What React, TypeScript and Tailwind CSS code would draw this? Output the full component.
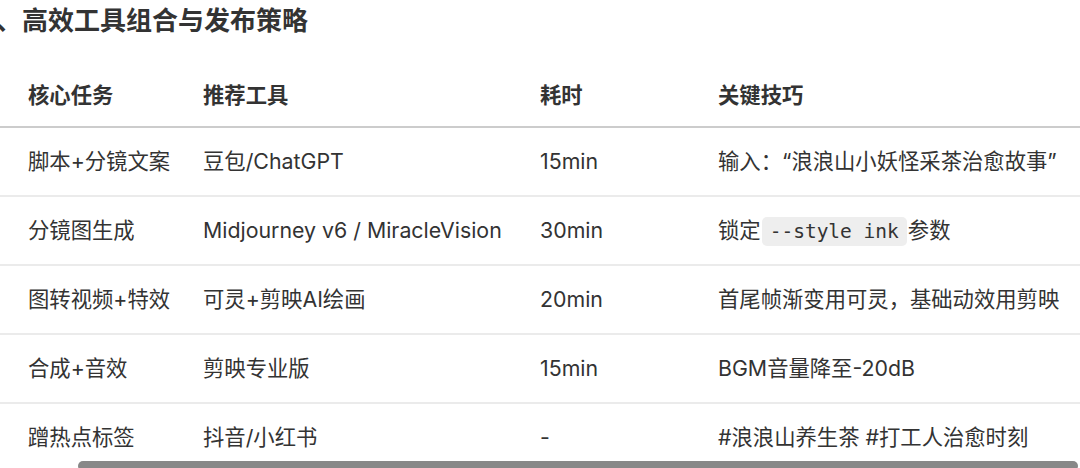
import React from 'react';

const rows = [
    { task: '脚本+分镜文案', tool: '豆包/ChatGPT', time: '15min', tip: <>输入：“浪浪山小妖怪采茶治愈故事”</> },
    {
        task: '分镜图生成',
        tool: 'Midjourney v6 / MiracleVision',
        time: '30min',
        tip: (
            <>
                锁定
                <code className="mx-[1px] rounded-[5px] bg-[#eeeeee] px-[8px] py-[3px] font-['DejaVu_Sans_Mono',monospace] text-[19.5px]">
                    --style ink
                </code>
                参数
            </>
        ),
    },
    { task: '图转视频+特效', tool: '可灵+剪映AI绘画', time: '20min', tip: <>首尾帧渐变用可灵，基础动效用剪映</> },
    { task: '合成+音效', tool: '剪映专业版', time: '15min', tip: <>BGM音量降至-20dB</> },
    { task: '蹭热点标签', tool: '抖音/小红书', time: '-', tip: <>#浪浪山养生茶 #打工人治愈时刻</> },
];

export default function App() {
    return (
        <div className="relative h-[468px] w-[1080px] overflow-hidden bg-white font-['Inter','Noto_Sans_CJK_SC',sans-serif] text-[#333333]">
            <h2 className="-ml-[4px] h-[42px] text-[26px] font-bold leading-[42px] text-[#333333]">
                、高效工具组合与发布策略
            </h2>

            <div className="mt-[24px] text-[21.33px]">
                <div className="grid h-[62px] grid-cols-[175px_337px_178px_1fr] items-center border-b-2 border-[#cccccc] font-bold">
                    <div className="pl-[28px]">核心任务</div>
                    <div className="pl-[28px]">推荐工具</div>
                    <div className="pl-[28px]">耗时</div>
                    <div className="pl-[28px]">关键技巧</div>
                </div>
                {rows.map((r) => (
                    <div
                        key={r.task}
                        className="grid h-[69px] grid-cols-[175px_337px_178px_1fr] items-center border-b-2 border-[#ebebeb]"
                    >
                        <div className="whitespace-nowrap pl-[28px]">{r.task}</div>
                        <div className="whitespace-nowrap pl-[28px]">{r.tool}</div>
                        <div className="whitespace-nowrap pl-[28px]">{r.time}</div>
                        <div className="whitespace-nowrap pl-[28px]">{r.tip}</div>
                    </div>
                ))}
            </div>

            {/* horizontal scrollbar overlay */}
            <div className="absolute left-[78px] top-[461px] h-[10px] w-[1000px] rounded-full bg-[#888888]" />
        </div>
    );
}
